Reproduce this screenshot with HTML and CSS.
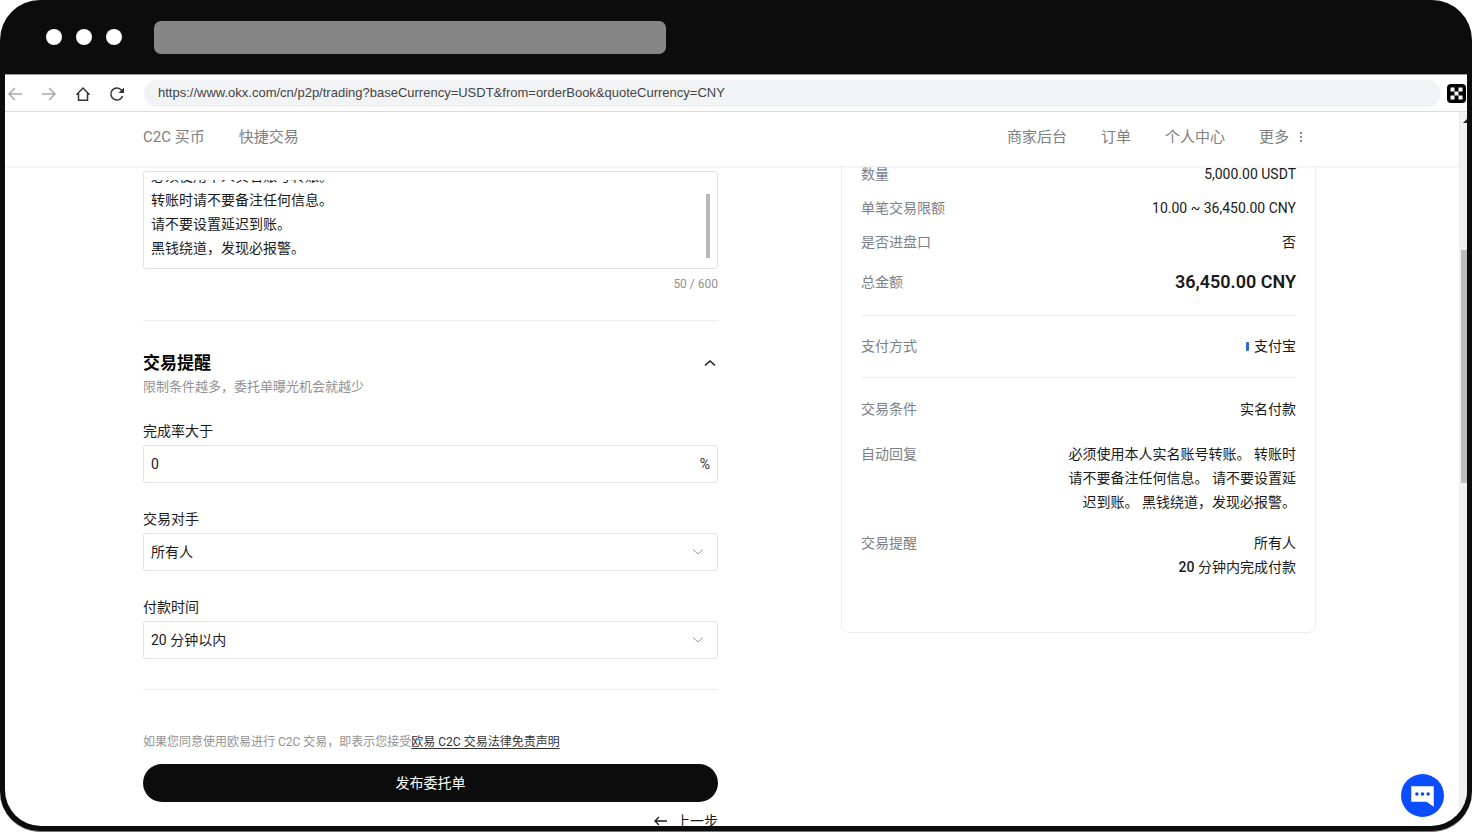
FILE: index.html
```html
<!DOCTYPE html>
<html lang="zh-CN">
<head>
<meta charset="utf-8">
<meta name="viewport" content="width=device-width, initial-scale=1">
<title>C2C 发布委托单</title>
<link rel="stylesheet" href="styles.css">
</head>
<body>
<div class="window">
  <div class="titlebar">
    <span class="dot"></span><span class="dot"></span><span class="dot"></span>
    <span class="tab"></span>
  </div>
  <div class="screen">
    <div class="toolbar">
      <button class="tool muted" aria-label="后退"><svg viewBox="0 0 16 16"><path d="M15 8H2M8 2 2 8l6 6"/></svg></button>
      <button class="tool muted" aria-label="前进"><svg viewBox="0 0 16 16"><path d="M1 8h13M8 2l6 6-6 6"/></svg></button>
      <button class="tool" aria-label="主页"><svg viewBox="0 0 16 16"><path d="M1.500 8.700 8 2l6.500 6.700M3.500 7.500v6.700h9V7.500"/></svg></button>
      <button class="tool" aria-label="刷新"><svg viewBox="0 0 16 16"><path d="M13.600 10A6 6 0 1 1 12.600 4.200L14 5.700"/><path class="solid" d="M15 1.500v5.500H9.500z"/></svg></button>
      <input class="url" type="text" aria-label="网址" value="https://www.okx.com/cn/p2p/trading?baseCurrency=USDT&amp;from=orderBook&amp;quoteCurrency=CNY">
      <svg class="ext" viewBox="0 0 19 19" aria-hidden="true"><rect width="19" height="19" rx="4" fill="#000"/><path fill="#fff" d="M3.500 3.500h4v4h-4zM11.500 3.500h4v4h-4zM7.500 7.500h4v4h-4zM3.500 11.500h4v4h-4zM11.500 11.500h4v4h-4z"/></svg>
    </div>
    <div class="viewport">
      <div class="page">
        <nav class="nav">
          <a href="#">C2C 买币</a>
          <a href="#">快捷交易</a>
          <a class="push" href="#">商家后台</a>
          <a href="#">订单</a>
          <a href="#">个人中心</a>
          <a class="more" href="#">更多 <svg viewBox="0 0 4 12" aria-hidden="true"><path d="M1 1h2v2H1zM1 5h2v2H1zM1 9h2v2H1z"/></svg></a>
        </nav>
        <main class="content">
          <form class="form">
            <div class="reply">
              <textarea id="reply" aria-label="自动回复">必须使用本人实名账号转账。
转账时请不要备注任何信息。
请不要设置延迟到账。
黑钱绕道，发现必报警。</textarea>
              <span class="reply-thumb"></span>
            </div>
            <p class="count">50 / 600</p>
            <hr>
            <div class="heading">
              <h2>交易提醒</h2>
              <button type="button" class="fold" aria-label="收起"><svg viewBox="0 0 12 8"><path d="M1 6.500 6 2l5 4.500"/></svg></button>
            </div>
            <p class="hint">限制条件越多，委托单曝光机会就越少</p>
            <div class="field">
              <label for="rate">完成率大于</label>
              <div class="box"><input id="rate" type="text" value="0"><span class="unit">%</span></div>
            </div>
            <div class="field">
              <label for="party">交易对手</label>
              <div class="box"><select id="party"><option>所有人</option></select><svg class="caret" viewBox="0 0 12 8" aria-hidden="true"><path d="M1 1.500 6 6l5-4.500"/></svg></div>
            </div>
            <div class="field">
              <label for="time">付款时间</label>
              <div class="box"><select id="time"><option>20 分钟以内</option></select><svg class="caret" viewBox="0 0 12 8" aria-hidden="true"><path d="M1 1.500 6 6l5-4.500"/></svg></div>
            </div>
            <hr>
            <p class="terms">如果您同意使用欧易进行 C2C 交易，即表示您接受<a href="#">欧易 C2C 交易法律免责声明</a></p>
            <button type="button" class="submit">发布委托单</button>
            <button type="button" class="prev"><svg viewBox="0 0 14 10" aria-hidden="true"><path d="M13 5H1M5 1 1 5l4 4"/></svg>上一步</button>
          </form>
          <aside class="summary">
            <dl>
              <div class="row"><dt>数量</dt><dd>5,000.00 USDT</dd></div>
              <div class="row"><dt>单笔交易限额</dt><dd>10.00 ~ 36,450.00 CNY</dd></div>
              <div class="row"><dt>是否进盘口</dt><dd>否</dd></div>
              <div class="row total"><dt>总金额</dt><dd>36,450.00 CNY</dd></div>
              <div class="row ruled"><dt>支付方式</dt><dd><span class="mark"></span>支付宝</dd></div>
              <div class="row ruled"><dt>交易条件</dt><dd>实名付款</dd></div>
              <div class="row loose"><dt>自动回复</dt><dd>必须使用本人实名账号转账。 转账时请不要备注任何信息。 请不要设置延迟到账。 黑钱绕道，发现必报警。</dd></div>
              <div class="row last"><dt>交易提醒</dt><dd>所有人<br><b>20</b> 分钟内完成付款</dd></div>
            </dl>
          </aside>
        </main>
      </div>
      <div class="track"><svg viewBox="0 0 8 4" aria-hidden="true"><path d="M4 4 8 0v4z"/></svg><span class="thumb"></span></div>
    </div>
    <button class="chat" aria-label="在线客服"><svg viewBox="0 0 42 42"><path fill="#fff" d="M10 12h22v20l-7-5H10z"/><g fill="#0646e8"><circle cx="15.500" cy="19.500" r="1.700"/><circle cx="21" cy="19.500" r="1.700"/><circle cx="26.500" cy="19.500" r="1.700"/></g></svg></button>
  </div>
</div>
<script src="main.js"></script>
</body>
</html>
```
FILE: styles.css
```css
* { box-sizing: border-box; }
body, p, h2, dl, dd { margin: 0; }
body {
  background: #fff;
  color: #1a1a1a;
  font: 14px/24px Roboto, "Noto Sans CJK SC", sans-serif;
}
button, input, select, textarea { font: inherit; color: inherit; margin: 0; padding: 0; border: 0; background: none; outline: 0; }
button { cursor: pointer; }
svg { display: block; fill: none; stroke: currentColor; }
a { color: inherit; text-decoration: none; }

.window {
  display: flex;
  flex-direction: column;
  height: 100vh;
  padding: 0 5px 5px;
  overflow: hidden;
  border-bottom: 1px solid #777;
  border-radius: 40px;
  background: #0c0c0c;
}
.titlebar { display: flex; align-items: center; gap: 14px; height: 74px; padding-left: 41px; flex: none; }
.dot { width: 16px; height: 16px; border-radius: 50%; background: #fff; }
.tab { width: 36%; height: 33px; margin-left: 18px; border-radius: 7px; background: #868686; }

.screen {
  position: relative;
  display: flex;
  flex-direction: column;
  flex: 1;
  min-height: 0;
  overflow: hidden;
  border-top: 1px solid #999;
  border-radius: 0 0 36px 36px;
  background: #fff;
}
.toolbar { display: flex; align-items: center; gap: 18px; height: 37px; padding: 1px 1px 0 2px; flex: none; border-bottom: 1px solid #dadce0; }
.tool { width: 16px; height: 16px; color: #333; flex: none; }
.tool svg { stroke-width: 1.500; }
.tool .solid { fill: currentColor; stroke: none; }
.muted { color: #aaa; }
.url { flex: 1; min-width: 0; height: 27px; margin-left: 1px; padding: 0 14px 3px; border-radius: 14px; background: #f1f3f4; color: #444; font: 13px "Liberation Sans", sans-serif; }
.ext { width: 19px; height: 19px; margin-left: -12px; stroke: none; flex: none; }

.viewport { display: flex; flex: 1; min-height: 0; }
.page { display: flex; flex-direction: column; flex: 1; min-width: 0; }
.nav {
  z-index: 1;
  display: flex;
  align-items: center;
  gap: 34px;
  height: 54px;
  padding: 0 156px 4px 138px;
  flex: none;
  background: #fff;
  box-shadow: 0 1px 2px #00000014;
  color: #808080;
  font-size: 15px;
}
.push { margin-left: auto; }
.more { display: flex; align-items: center; gap: 10px; }
.more svg { width: 4px; height: 12px; fill: #888; stroke: none; }

.content {
  display: grid;
  grid-template-columns: 23fr 19fr;
  column-gap: 123px;
  align-items: start;
  flex: 1;
  min-height: 0;
  padding: 0 143px 0 138px;
  overflow: hidden;
}
hr { width: 100%; height: 1px; margin: 0; border: 0; background: #efefef; }

.form { display: flex; flex-direction: column; padding-top: 5px; }
.reply, .box { border: 1px solid #e2e2e2; border-radius: 3px; }
.reply { position: relative; padding: 8px 7px; }
.reply textarea { display: block; width: 100%; height: 80px; resize: none; overflow: hidden; }
.reply-thumb { position: absolute; right: 7px; bottom: 10px; width: 4px; height: 64px; background: #b8b8b8; }
.count { margin: 6px 0 27px; color: #929292; font-size: 12px; line-height: 18px; text-align: right; }
.heading { display: flex; justify-content: space-between; align-items: center; margin-top: 30px; padding-right: 2px; }
.heading h2 { font-size: 17px; line-height: 24px; font-weight: 700; color: #000; }
.fold svg { width: 12px; height: 8px; stroke-width: 1.500; }
.hint { margin-bottom: 20px; color: #929292; font-size: 13px; }
.field { display: flex; flex-direction: column; gap: 2px; margin-bottom: 24px; }
.box { position: relative; display: flex; align-items: center; height: 38px; padding: 0 7px; }
.box input { flex: 1; min-width: 0; }
.unit { color: #333; }
.box select { flex: 1; height: 36px; appearance: none; }
.caret { position: absolute; right: 13px; top: 14px; width: 12px; height: 8px; color: #999; pointer-events: none; }
.field + hr { margin-top: 6px; }
.terms { margin: 42px 0 12px; color: #929292; font-size: 12px; line-height: 20px; }
.terms a { color: #333; text-decoration: underline; text-underline-offset: 2px; }
.submit { height: 38px; border-radius: 19px; background: #0c0c0c; color: #fff; }
.prev { display: flex; align-items: center; align-self: flex-end; gap: 8px; margin-top: 7px; }
.prev svg { width: 14px; height: 10px; stroke-width: 1.300; }

.summary { margin-top: -8px; padding: 3px 19px 53px; border: 1px solid #eee; border-radius: 8px; }
.row { display: flex; justify-content: space-between; margin-bottom: 10px; }
dt { color: #7c8087; }
dd { max-width: 232px; text-align: right; }
.total { margin: 16px 0 21px; }
.total dd { font-size: 18px; font-weight: 600; }
.ruled { margin: 0; padding: 18px 0 19px; border-top: 1px solid #efefef; }
.ruled + .ruled { padding-top: 19px; }
.mark { display: inline-block; width: 3px; height: 9px; margin-right: 5px; border-radius: 1px; background: #3366d6; }
.loose { margin: 2px 0 17px; }
.last { margin: 0; }
b { font-weight: 500; }

.track { display: flex; flex-direction: column; align-items: flex-end; width: 8px; padding-top: 7px; background: #f0f0f0; flex: none; }
.track svg { width: 8px; height: 4px; fill: #222; stroke: none; }
.thumb { width: 6px; height: 33%; margin-top: 127px; background: #bcbcbc; }
.chat { position: absolute; right: 23px; bottom: 9px; width: 43px; height: 43px; border-radius: 50%; background: #0a4dff; }
.chat svg { stroke: none; }
```
FILE: main.js
```js
const reply = document.getElementById('reply');
reply.scrollTop = reply.scrollHeight;
```
